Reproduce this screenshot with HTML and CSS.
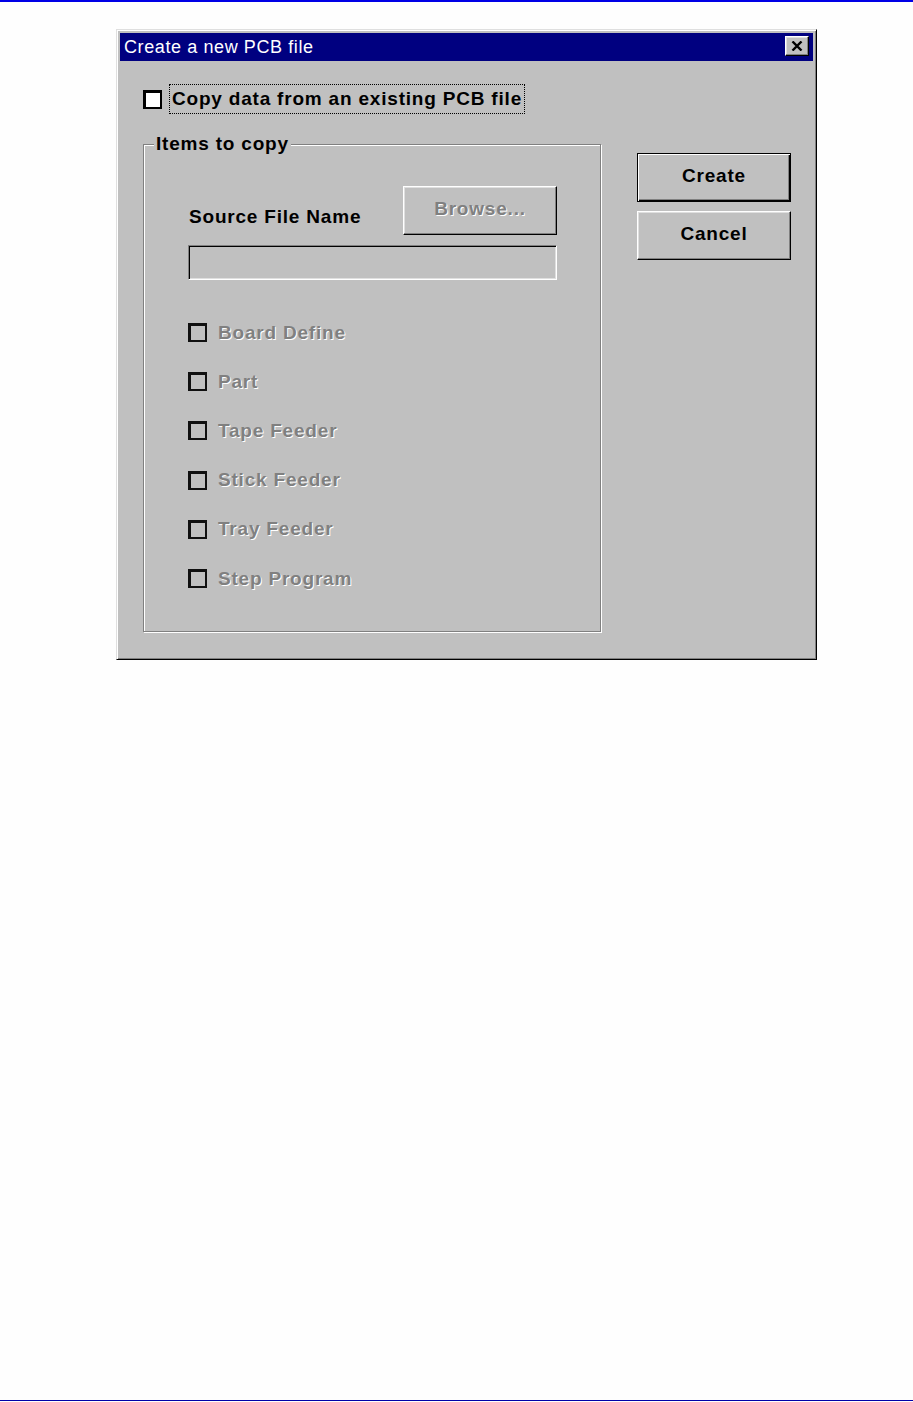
FILE: index.html
```html
<!DOCTYPE html>
<html lang="en">
<head>
    <meta charset="UTF-8">
    <title>Create a new PCB file</title>
    <link rel="stylesheet" href="styles.css">
</head>
<body>
    <div class="rule-top"></div>

    <div class="dialog">
        <div class="titlebar">
            <span class="title">Create a new PCB file</span>
            <span class="close">
                <svg width="12" height="10" viewBox="0 0 12 10">
                    <path d="M1.5 0.5 L10.5 9.5 M10.5 0.5 L1.5 9.5" stroke="#000" stroke-width="2.4" fill="none"/>
                </svg>
            </span>
        </div>

        <div class="content">
            <div class="left">
                <div class="copy-row">
                    <span class="check"></span>
                    <span class="focus">Copy data from an existing PCB file</span>
                </div>

                <div class="group">
                    <span class="legend">Items to copy</span>

                    <div class="source-row">
                        <span class="source-label">Source File Name</span>
                        <span class="btn disabled">Browse...</span>
                    </div>
                    <div class="textbox"></div>

                    <ul class="items">
                        <li><span class="check off"></span><span class="dim">Board Define</span></li>
                        <li><span class="check off"></span><span class="dim">Part</span></li>
                        <li><span class="check off"></span><span class="dim">Tape Feeder</span></li>
                        <li><span class="check off"></span><span class="dim">Stick Feeder</span></li>
                        <li><span class="check off"></span><span class="dim">Tray Feeder</span></li>
                        <li><span class="check off"></span><span class="dim">Step Program</span></li>
                    </ul>
                </div>
            </div>

            <div class="right">
                <span class="btn default">Create</span>
                <span class="btn">Cancel</span>
            </div>
        </div>
    </div>

    <div class="rule-bottom"></div>
</body>
</html>
```

FILE: styles.css
```css
* {
    margin: 0;
    padding: 0;
    box-sizing: border-box;
}

body {
    height: 1402px;
    display: flex;
    flex-direction: column;
    background: #fefefe;
    font-family: "Liberation Sans", Arial, sans-serif;
    font-size: 19px;
    line-height: 22px;
    color: #000;
}

.rule-top {
    height: 2px;
    background: #0000e6;
}

.rule-bottom {
    margin-top: auto;
    margin-bottom: 1px;
    height: 1px;
    background: #0000a8;
}

/* window frame */
.dialog {
    margin-top: 27px;
    margin-left: 116px;
    width: 701px;
    padding: 3px;
    background: #c0c0c0;
    border: 1px solid;
    border-color: #dfdfdf #000 #000 #dfdfdf;
    box-shadow: inset 1px 1px 0 #fff, inset -1px -1px 0 #808080;
}

.titlebar {
    height: 28px;
    display: flex;
    justify-content: space-between;
    background: #000080;
    color: #fff;
}

.title {
    padding-left: 4px;
    font-size: 18px;
    line-height: 28px;
    letter-spacing: 0.6px;
}

.close {
    width: 24px;
    height: 20px;
    margin: 3px 4px 0 0;
    display: flex;
    align-items: center;
    justify-content: center;
    background: #c0c0c0;
    border: 1px solid;
    border-color: #fff #000 #000 #fff;
    box-shadow: inset -1px -1px 0 #808080, inset 1px 1px 0 #dfdfdf;
}

.content {
    display: flex;
    gap: 35px;
    padding: 23px 21px 24px 23px;
}

.left {
    width: 459px;
}

.copy-row {
    display: flex;
    align-items: center;
    height: 30px;
    font-weight: bold;
    letter-spacing: 0.8px;
}

.check {
    width: 19px;
    height: 19px;
    background: #fff;
    border-style: solid;
    border-color: #000;
    border-width: 3px 2px 2px 3px;
}

.check.off {
    background: #c0c0c0;
    border-color: #101010;
}

.focus {
    margin-left: 7px;
    padding: 3px 2px;
    border: 1px dotted #000;
}

/* etched group box */
.group {
    position: relative;
    margin-top: 30px;
    width: 458px;
    height: 488px;
    padding: 0 43px 0 44px;
    border: 1px solid #808080;
    box-shadow: inset 1px 1px 0 #fff, 1px 1px 0 #fff;
    font-weight: bold;
    letter-spacing: 0.8px;
}

.legend {
    position: absolute;
    top: -12px;
    left: 10px;
    padding: 0 2px;
    background: #c0c0c0;
}

.source-row {
    display: flex;
    justify-content: space-between;
    align-items: flex-end;
    margin-top: 41px;
}

.source-label {
    padding-left: 1px;
    margin-bottom: 7px;
}

.btn {
    width: 154px;
    height: 49px;
    padding-bottom: 3px;
    display: flex;
    align-items: center;
    justify-content: center;
    font-weight: bold;
    letter-spacing: 0.8px;
    background: #c0c0c0;
    border: 1px solid;
    border-color: #fff #000 #000 #fff;
    box-shadow: inset -1px -1px 0 #808080, inset 1px 1px 0 #dfdfdf;
}

.btn.default {
    border-color: #000;
    box-shadow: inset 1px 1px 0 #fff, inset -1px -1px 0 #000, inset -2px -2px 0 #808080;
}

.disabled,
.dim {
    color: #808080;
    text-shadow: 1px 1px 0 #fff;
}

.textbox {
    margin-top: 10px;
    height: 35px;
    border: 1px solid;
    border-color: #808080 #fff #fff #808080;
    box-shadow: inset 1px 1px 0 #000, inset -1px -1px 0 #dfdfdf;
}

.items {
    list-style: none;
    margin-top: 28px;
}

.items li {
    display: flex;
    align-items: center;
    gap: 11px;
    height: 49.2px;
}

.right {
    display: flex;
    flex-direction: column;
    gap: 9px;
    padding-top: 69px;
}
```
